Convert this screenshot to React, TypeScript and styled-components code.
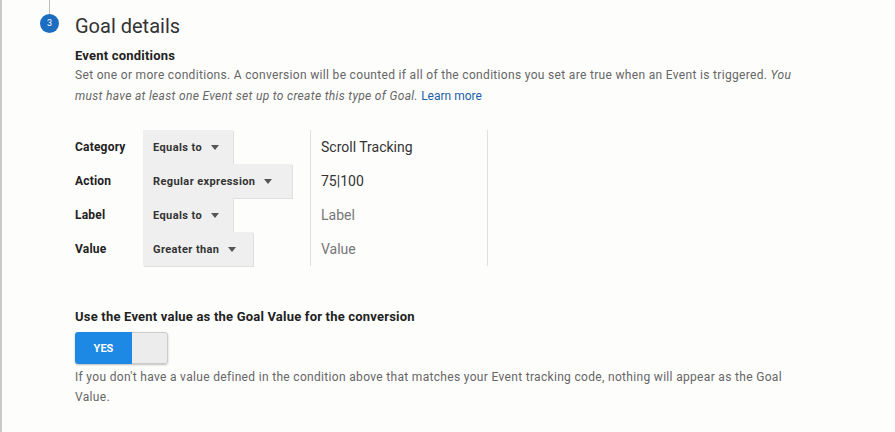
import React from 'react';
import styled, { createGlobalStyle } from 'styled-components';

const GlobalStyle = createGlobalStyle`
  html, body {
    margin: 0;
    padding: 0;
    background: #fdfdfc;
    font-family: Roboto, "Liberation Sans", Arial, sans-serif;
  }
`;

type Condition = {
  name: string;
  match: string;
  value: string;
  width: number;
  placeholder?: boolean;
};

const conditions: Condition[] = [
  { name: 'Category', match: 'Equals to', value: 'Scroll Tracking', width: 90 },
  { name: 'Action', match: 'Regular expression', value: '75|100', width: 149 },
  { name: 'Label', match: 'Equals to', value: 'Label', width: 90, placeholder: true },
  { name: 'Value', match: 'Greater than', value: 'Value', width: 110, placeholder: true },
];

const Caret = () => (
  <svg width="8" height="5" viewBox="0 0 8 5">
    <path d="M0 0 L8 0 L4 5 Z" fill="#555" />
  </svg>
);

export default function App() {
  return (
    <>
      <GlobalStyle />
      <Page>
        <StepRail>
          <RailLine />
          <StepBadge>3</StepBadge>
        </StepRail>
        <Content>
          <Title>Goal details</Title>
          <SectionTitle>Event conditions</SectionTitle>
          <Description>
            Set one or more conditions. A conversion will be counted if all of the conditions you set are true when an Event is triggered.{' '}
            <em>You must have at least one Event set up to create this type of Goal.</em>{' '}
            <LearnMore href="#">Learn more</LearnMore>
          </Description>

          <ConditionTable>
            {conditions.map((c) => (
              <ConditionRow key={c.name}>
                <RowLabel>{c.name}</RowLabel>
                <MatchCell>
                  <Dropdown $width={c.width}>
                    {c.match}
                    <Caret />
                  </Dropdown>
                </MatchCell>
                <ValueCell $placeholder={c.placeholder}>{c.value}</ValueCell>
              </ConditionRow>
            ))}
          </ConditionTable>

          <SectionTitle $top={42}>Use the Event value as the Goal Value for the conversion</SectionTitle>
          <Toggle>
            <ToggleOn>YES</ToggleOn>
            <ToggleKnob />
          </Toggle>
          <Note>
            If you don't have a value defined in the condition above that matches your Event tracking code, nothing will appear as the Goal Value.
          </Note>
        </Content>
      </Page>
    </>
  );
}

const Page = styled.div`
  display: flex;
  width: 895px;
  height: 432px;
  box-sizing: border-box;
  border-left: 2px solid #c9c9c9;
  overflow: hidden;
`;

const StepRail = styled.div`
  width: 73px;
  display: flex;
  flex-direction: column;
  align-items: center;
  padding-left: 22px;
  box-sizing: border-box;
`;

const RailLine = styled.div`
  width: 1px;
  height: 14px;
  background: #bdbdbd;
`;

const StepBadge = styled.div`
  width: 19px;
  height: 19px;
  border-radius: 50%;
  background: #1c6dbf;
  color: #fff;
  font-size: 9px;
  line-height: 19px;
  text-align: center;
`;

const Content = styled.div`
  width: 735px;
  padding-top: 13px;
`;

const Title = styled.h1`
  margin: 0;
  font-size: 20px;
  font-weight: 400;
  color: #333;
  line-height: 26px;
`;

const SectionTitle = styled.h2<{ $top?: number }>`
  margin: ${(p) => p.$top ?? 8}px 0 0;
  font-size: 13px;
  font-weight: 700;
  color: #222;
  line-height: 18px;
  letter-spacing: 0.2px;
`;

const Description = styled.p`
  margin: 0;
  font-size: 12px;
  color: #666;
  line-height: 21px;
  letter-spacing: 0.32px;

  em {
    font-style: italic;
  }
`;

const LearnMore = styled.a`
  color: #1a5fa8;
  text-decoration: none;
  letter-spacing: 0;
`;

const ConditionTable = styled.div`
  margin-top: 23px;
  display: flex;
  flex-direction: column;
`;

const ConditionRow = styled.div`
  display: grid;
  grid-template-columns: 68px 168px 177px;
  height: 34px;
`;

const RowLabel = styled.div`
  display: flex;
  align-items: center;
  font-size: 12px;
  font-weight: 700;
  color: #222;
  letter-spacing: 0.2px;
`;

const MatchCell = styled.div`
  display: flex;
  border-right: 1px solid #e0e0e0;
`;

const Dropdown = styled.div<{ $width: number }>`
  width: ${(p) => p.$width}px;
  display: flex;
  align-items: center;
  gap: 9px;
  padding-left: 10px;
  box-sizing: border-box;
  background: #efefef;
  box-shadow: 1px 1px 0 #e0e0e0;
  font-size: 11px;
  font-weight: 700;
  color: #333;
  letter-spacing: 0.4px;
`;

const ValueCell = styled.div<{ $placeholder?: boolean }>`
  display: flex;
  align-items: center;
  padding-left: 10px;
  font-size: 14px;
  color: ${(p) => (p.$placeholder ? '#777' : '#333')};
  border-right: 1px solid #e0e0e0;
`;

const Toggle = styled.div`
  margin-top: 6px;
  display: flex;
  width: 93px;
  height: 32px;
  border-radius: 3px;
  overflow: hidden;
  box-shadow: 0 1px 2px rgba(0, 0, 0, 0.25);
`;

const ToggleOn = styled.div`
  width: 57px;
  background: #1e88e5;
  color: #fff;
  font-size: 11px;
  font-weight: 700;
  display: flex;
  align-items: center;
  justify-content: center;
`;

const ToggleKnob = styled.div`
  flex: 1;
  background: #ececec;
  border: 1px solid #ccc;
  border-left: none;
  border-radius: 0 3px 3px 0;
`;

const Note = styled.p`
  margin: 3px 0 0;
  font-size: 12px;
  color: #666;
  line-height: 20px;
  letter-spacing: 0.32px;
`;
